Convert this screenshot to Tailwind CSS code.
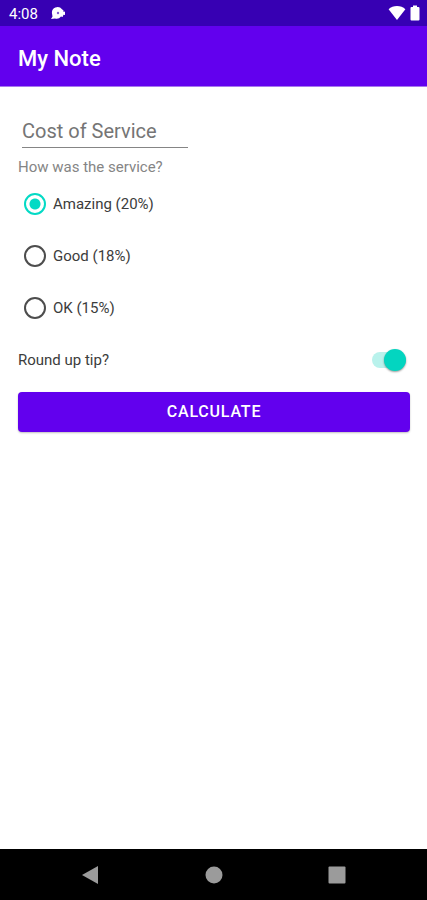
<!DOCTYPE html>
<html lang="en">
<head>
  <meta charset="UTF-8" />
  <meta name="viewport" content="width=device-width, initial-scale=1.0"/>
  <title>My Note</title>
  <script src="https://cdn.jsdelivr.net/npm/@tailwindcss/browser@4"></script>
</head>
<body class="bg-white min-h-screen flex flex-col font-[Roboto,sans-serif] text-[15px] text-[#3c3c3c]">
  <!-- Status bar -->
  <div class="h-[26px] bg-[#3700b3] text-white flex items-center justify-between pl-[9px] pr-[7px]">
    <div class="flex items-center gap-3 pt-[2px]">
      <span class="text-[15px] leading-5">4:08</span>
      <svg class="w-4 h-4" viewBox="0 0 16 16" fill="none">
        <path d="M2 7.500A5.600 5.600 0 0 1 12 3.300L13.500 4.500V6L15 5.500V9l-1.500-.3L12.600 11 11 10.600A5.600 5.600 0 0 1 5 12.500L1 13l1.500-2.500z" fill="#fff"/>
        <circle cx="8" cy="7" r="1.200" fill="#7d5bd0"/>
      </svg>
    </div>
    <div class="flex items-center gap-1">
      <svg class="w-[18px] h-4" viewBox="0 0 18 16" fill="#fff"><path d="M9 1C5.8 1 2.8 2.200.6 4.200L9 15l8.400-10.800C15.200 2.200 12.200 1 9 1z"/></svg>
      <svg class="w-[10px] h-4" viewBox="0 0 10 16" fill="#fff"><path d="M3 .5h4V2h1.500a1 1 0 0 1 1 1v11.500a1 1 0 0 1-1 1h-7a1 1 0 0 1-1-1V3a1 1 0 0 1 1-1H3z"/></svg>
    </div>
  </div>

  <header class="h-[61px] bg-[#6200ee] border-b border-[#a777ee] px-[18px] pt-[5px] flex items-center">
    <h1 class="text-[22px] leading-7 font-medium text-white">My Note</h1>
  </header>

  <form class="grow pl-[18px] pr-[17px] pt-7" onsubmit="return false">
    <input type="text" id="cost" aria-label="Cost of Service" placeholder="Cost of Service" class="block ml-1 w-[166px] h-[33px] border-b border-[#858585] text-xl placeholder:text-[#757575] focus:outline-none" />

    <fieldset class="mt-[9px]">
      <legend class="leading-[21px] text-[#858585]">How was the service?</legend>
      <label class="h-[52px] pl-[6px] flex items-center gap-[7px]">
        <input type="radio" name="tip" checked class="appearance-none w-[22px] h-[22px] rounded-full border-2 border-[#4d4d4d] checked:border-[#03dac5] checked:bg-[radial-gradient(circle,#03dac5_5px,transparent_6px)]" />
        Amazing (20%)
      </label>
      <label class="h-[52px] pl-[6px] flex items-center gap-[7px]">
        <input type="radio" name="tip" class="appearance-none w-[22px] h-[22px] rounded-full border-2 border-[#4d4d4d] checked:border-[#03dac5] checked:bg-[radial-gradient(circle,#03dac5_5px,transparent_6px)]" />
        Good (18%)
      </label>
      <label class="h-[52px] pl-[6px] flex items-center gap-[7px]">
        <input type="radio" name="tip" class="appearance-none w-[22px] h-[22px] rounded-full border-2 border-[#4d4d4d] checked:border-[#03dac5] checked:bg-[radial-gradient(circle,#03dac5_5px,transparent_6px)]" />
        OK (15%)
      </label>
    </fieldset>

    <label class="h-[52px] pr-1 flex items-center justify-between">
      Round up tip?
      <input type="checkbox" role="switch" checked class="appearance-none w-[34px] h-4 rounded-full bg-[#b9f2ec] flex items-center justify-end before:w-[22px] before:h-[22px] before:shrink-0 before:rounded-full before:bg-[#03d5c0] before:shadow-[0_1px_2px_rgba(0,0,0,0.4)]" />
    </label>

    <button type="submit" class="mt-[6px] w-full h-10 rounded-sm bg-[#6200ee] text-white text-base font-medium tracking-wider shadow-[0_1px_2px_rgba(0,0,0,0.25)]">CALCULATE</button>
  </form>

  <!-- Navigation bar -->
  <nav class="h-[51px] bg-black px-7 flex items-center">
    <button type="button" aria-label="Back" class="flex-1 flex justify-center">
      <svg class="w-[18px] h-[18px]" viewBox="0 0 18 18" fill="#9b9b9b"><path d="M17 0v18L1 9z"/></svg>
    </button>
    <button type="button" aria-label="Home" class="flex-1 flex justify-center">
      <svg class="w-[18px] h-[18px]" viewBox="0 0 18 18" fill="#9b9b9b"><circle cx="9" cy="9" r="8.500"/></svg>
    </button>
    <button type="button" aria-label="Recent apps" class="flex-1 flex justify-center">
      <svg class="w-[18px] h-[18px]" viewBox="0 0 18 18" fill="#9b9b9b"><rect x=".5" y=".5" width="17" height="17" rx="1"/></svg>
    </button>
  </nav>
</body>
</html>
